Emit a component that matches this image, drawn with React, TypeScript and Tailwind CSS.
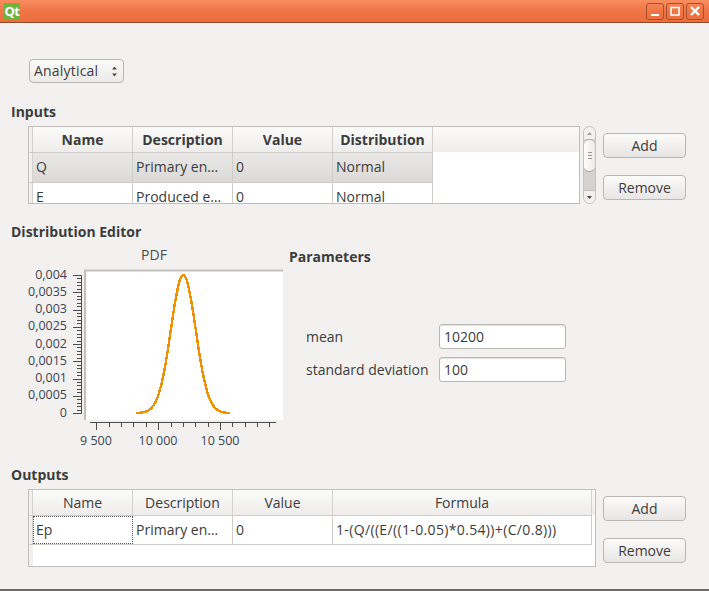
const font = { fontFamily: '"Open Sans", "Noto Sans", sans-serif' }

const inputs = [
  ["Q", "Primary en…", "0", "Normal"],
  ["E", "Produced e…", "0", "Normal"],
]

const PushButton = ({ label }: { label: string }) => (
  <button className="w-[83px] h-[25px] rounded-[4px] border border-[#b9b7b4] bg-gradient-to-b from-[#fbfbfa] to-[#e8e6e4] text-[14px] text-[#3c3c3c]">
    {label}
  </button>
)

const HeaderCell = ({ label, bold, w }: { label: string; bold?: boolean; w: string }) => (
  <div className={`${w} shrink-0 h-full flex items-center justify-center border-r border-[#d4d2cf] ${bold ? "font-bold" : ""}`}>
    {label}
  </div>
)

const Cell = ({ label, w, dotted, wide }: { label: string; w: string; dotted?: boolean; wide?: boolean }) => (
  <div className={`${w} shrink-0 h-full flex items-center pl-[3px] pb-[2px] whitespace-nowrap overflow-hidden ${wide ? "tracking-[0.35px]" : ""} ${dotted ? "outline-1 outline-dotted outline-offset-[-1px] outline-[#555]" : "border-r border-[#cfcdca]"}`}>
    {label}
  </div>
)

const SectionLabel = ({ label }: { label: string }) => (
  <div className="h-5 flex items-center pb-[2px] font-bold">{label}</div>
)

const Scrollbar = () => (
  <div className="w-[13px] h-[78px] ml-[3px] rounded-[7px] border border-[#c4c2bf] bg-[#d5d3d0] flex flex-col items-center overflow-hidden">
    <div className="w-full h-[12px] bg-[#f2f1f0] flex items-center justify-center shrink-0">
      <svg width="7" height="5"><path d="M3.5 1 L6 4 L1 4 Z" fill="#a5a3a0" /></svg>
    </div>
    <div className="w-full h-[33px] shrink-0 rounded-[6px] border-y border-[#a9a7a4] bg-gradient-to-r from-[#fdfdfc] to-[#ecebe9] flex flex-col items-center justify-center gap-[2px]">
      <div className="w-[4px] h-px bg-[#9a9895]" />
      <div className="w-[4px] h-px bg-[#9a9895]" />
      <div className="w-[4px] h-px bg-[#9a9895]" />
    </div>
    <div className="flex-1" />
    <div className="w-full h-[13px] bg-[#f2f1f0] border-t border-[#c4c2bf] flex items-center justify-center shrink-0">
      <svg width="7" height="5"><path d="M1 1 L6 1 L3.5 4 Z" fill="#4c4c4c" /></svg>
    </div>
  </div>
)

const SideButtons = () => (
  <div className="ml-[7px] pt-[7px] flex flex-col gap-[17px]">
    <PushButton label="Add" />
    <PushButton label="Remove" />
  </div>
)

const WindowButton = ({ children }: { children: React.ReactNode }) => (
  <div className="w-[18px] h-[17px] rounded-[3px] border border-[#a94f2a] flex items-center justify-center">
    <svg width="12" height="12" viewBox="0 0 12 12" fill="none" stroke="#fff" strokeWidth="2">
      {children}
    </svg>
  </div>
)

const yLabels = ["0,004", "0,0035", "0,003", "0,0025", "0,002", "0,0015", "0,001", "0,0005", "0"]

const Chart = () => {
  const points: string[] = []
  for (let v = 9820; v <= 10580; v += 8) {
    const x = 183.3 + (v - 10200) * 0.1237
    const y = 413 - 138 * Math.exp(-((v - 10200) ** 2) / (2 * 100 * 100))
    points.push(`${x.toFixed(1)},${y.toFixed(1)}`)
  }
  const yMinor = Array.from({ length: 41 }, (_, i) => 275 + i * 3.45)
  const xMinor = Array.from({ length: 15 }, (_, i) => 96.3 + i * 12.37)

  return (
    <svg width="278" height="199" viewBox="11 246 278 199" className="shrink-0" style={font}>
      <text x="154" y="260" textAnchor="middle" fontSize="14" fill="#4c4c4c">PDF</text>
      <rect x="84" y="270" width="199" height="150" fill="#fff" />
      <path d="M85 270 V420 M84 270.5 H283" stroke="#c2c0bd" strokeWidth="2" fill="none" />
      <path d="M81.5 275 V414" stroke="#4c4c4c" fill="none" />
      {yMinor.map((y, i) => (
        <line key={i} x1={i % 5 === 0 ? 73 : 77} x2="81" y1={Math.round(y) + 0.5} y2={Math.round(y) + 0.5} stroke="#4c4c4c" />
      ))}
      {yLabels.map((l, i) => (
        <text key={l} x="67" y={278.5 + i * 17.25} textAnchor="end" fontSize="12.5" fill="#3c4450">{l}</text>
      ))}
      <path d="M90 422.5 H276" stroke="#4c4c4c" fill="none" />
      {xMinor.map((x, i) => (
        <line key={i} x1={Math.round(x) + 0.5} x2={Math.round(x) + 0.5} y1="422" y2={i % 5 === 0 ? 430 : 427} stroke="#4c4c4c" />
      ))}
      <text x="96" y="445" textAnchor="middle" fontSize="12.5" fill="#3c4450">9 500</text>
      <text x="158" y="445" textAnchor="middle" fontSize="12.5" fill="#3c4450">10 000</text>
      <text x="220" y="445" textAnchor="middle" fontSize="12.5" fill="#3c4450">10 500</text>
      <polyline points={points.join(" ")} fill="none" stroke="#f09000" strokeWidth="2.4" shapeRendering="crispEdges" />
    </svg>
  )
}

const Field = ({ label, value }: { label: string; value: string }) => (
  <div className="flex items-center h-[25px]">
    <div className="w-[150px] pl-[17px] whitespace-nowrap">{label}</div>
    <div className="w-[127px] h-[25px] rounded-[3px] border border-[#b9b7b4] bg-white flex items-center pl-[4px] shadow-[inset_0_1px_1px_#e4e2e0]">
      {value}
    </div>
  </div>
)

export default function App() {
  return (
    <div className="w-[709px] h-[591px] flex flex-col bg-[#f2f1f0] text-[14px] text-[#3c3c3c] border-b-2 border-[#6b6a68] overflow-hidden" style={font}>
      <div className="h-[23px] shrink-0 flex items-center justify-between pl-[4px] pr-[5px] bg-gradient-to-b from-[#fb8d60] via-[#ef7545] to-[#ec6d3c] border-b border-[#8f4a2b]">
        <div className="w-[16px] h-[16px] bg-[#6eb43c] flex items-center justify-center text-white font-bold text-[13px] tracking-[-0.5px] leading-none">Qt</div>
        <div className="flex gap-[2px]">
          <WindowButton><path d="M2 10 H10" /></WindowButton>
          <WindowButton><path d="M2 2.5 H10 V10 H2 Z" strokeWidth="1.5" /></WindowButton>
          <WindowButton><path d="M2 2 L10 10 M10 2 L2 10" strokeWidth="2.4" /></WindowButton>
        </div>
      </div>

      <div className="pl-[11px] flex flex-col">
        <div className="mt-[36px] ml-[18px] w-[95px] h-[24px] rounded-[4px] border border-[#b9b7b4] bg-gradient-to-b from-[#fafaf9] to-[#eceae8] flex items-center justify-between pl-[4px] pr-[5px]">
          <span className="pb-[2px] tracking-[0.2px]">Analytical</span>
          <svg width="7" height="13" viewBox="0 0 7 13" fill="#4c4c4c"><path d="M3.5 1.5 L6 4.5 L1 4.5 Z M1 8.5 L6 8.5 L3.5 11.5 Z" /></svg>
        </div>

        <div className="mt-[19px]"><SectionLabel label="Inputs" /></div>
        <div className="mt-[4px] flex items-start">
          <div className="ml-[17px] w-[552px] h-[78px] border border-[#c0bebb] bg-white overflow-hidden shrink-0">
            <div className="h-[25px] flex items-stretch bg-[#f2f1f0]">
              <div className="w-[4px] shrink-0 border-r border-[#d4d2cf]" />
              <div className="flex h-full flex-1 bg-gradient-to-b from-[#fbfbfa] to-[#eeedeb]">
                <HeaderCell label="Name" bold w="w-[100px]" />
                <HeaderCell label="Description" bold w="w-[100px]" />
                <HeaderCell label="Value" bold w="w-[100px]" />
                <HeaderCell label="Distribution" bold w="w-[100px]" />
              </div>
            </div>
            {inputs.map((row, i) => (
              <div key={row[0]} className="h-[30px] flex border-t border-[#cfcdca] w-[404px]">
                <div className="w-[4px] shrink-0 bg-[#f2f1f0] border-r border-[#d4d2cf]" />
                <div className={`flex h-full ${i === 0 ? "bg-gradient-to-b from-[#e9e8e6] to-[#dcdad8]" : "bg-white"}`}>
                  <Cell label={row[0]} w="w-[100px]" />
                  <Cell label={row[1]} w="w-[100px]" />
                  <Cell label={row[2]} w="w-[100px]" />
                  <Cell label={row[3]} w="w-[100px]" />
                </div>
              </div>
            ))}
          </div>
          <Scrollbar />
          <SideButtons />
        </div>

        <div className="mt-[18px]"><SectionLabel label="Distribution Editor" /></div>
        <div className="mt-[4px] flex items-start">
          <Chart />
          <div className="flex flex-col">
            <div className="mt-[1px]"><SectionLabel label="Parameters" /></div>
            <div className="mt-[57px] flex flex-col gap-[8px]">
              <Field label="mean" value="10200" />
              <Field label="standard deviation" value="100" />
            </div>
          </div>
        </div>

        <div className="mt-[20px]"><SectionLabel label="Outputs" /></div>
        <div className="mt-[4px] flex items-start">
          <div className="ml-[17px] w-[568px] h-[78px] border border-[#c0bebb] bg-white overflow-hidden shrink-0">
            <div className="h-[25px] flex items-stretch bg-[#f2f1f0]">
              <div className="w-[4px] shrink-0 border-r border-[#d4d2cf]" />
              <div className="flex h-full flex-1 bg-gradient-to-b from-[#fbfbfa] to-[#eeedeb]">
                <HeaderCell label="Name" w="w-[100px]" />
                <HeaderCell label="Description" w="w-[100px]" />
                <HeaderCell label="Value" w="w-[100px]" />
                <HeaderCell label="Formula" w="w-[259px]" />
              </div>
            </div>
            <div className="h-[30px] w-[563px] flex border-y border-[#cfcdca]">
              <div className="w-[4px] shrink-0 bg-[#f2f1f0] border-r border-[#d4d2cf]" />
              <Cell label="Ep" w="w-[100px]" dotted />
              <Cell label="Primary en…" w="w-[100px]" />
              <Cell label="0" w="w-[100px]" />
              <Cell label="1-(Q/((E/((1-0.05)*0.54))+(C/0.8)))" w="w-[259px]" wide />
            </div>
            <div className="h-[21px] flex">
              <div className="w-[4px] shrink-0 bg-[#f2f1f0]" />
            </div>
          </div>
          <SideButtons />
        </div>
      </div>
    </div>
  )
}
